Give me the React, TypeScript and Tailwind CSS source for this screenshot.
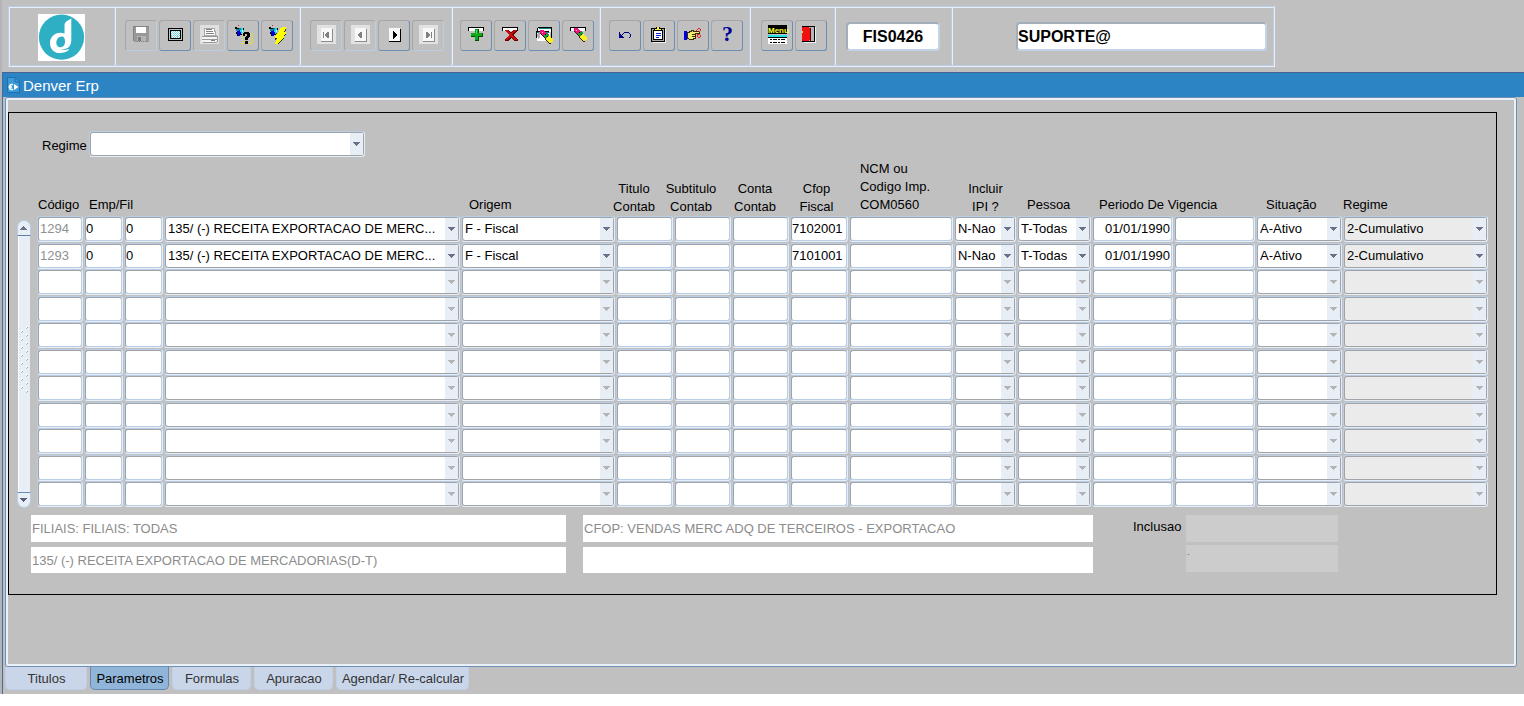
import { ReactNode } from 'react';

const font = 'font-["Liberation_Sans",Arial,sans-serif]';

/* ---------- toolbar icons ---------- */

const Icon = ({ children }: { children: ReactNode }) => (
  <svg width="20" height="19" viewBox="0 0 20 19" shapeRendering="crispEdges" className="block overflow-visible" aria-hidden="true">
    {children}
  </svg>
);

const Logo = () => (
  <svg width="47" height="47" viewBox="0 0 47 47" role="img" aria-label="Denver">
    <rect width="47" height="47" fill="#fff" />
    <circle cx="23.5" cy="23.2" r="22.6" fill="#2eafc4" />
    <path d="M33 4.5C32 6 27 6.500 26.500 11V19.500C18.500 17 12 22 12 29C12 36 17 39.500 23 39C27 38.800 30 37 31.500 35C28 36 25 36.300 22.500 35.800C31 35.500 33.300 31 33.300 26V4.500Z" fill="#fff" />
    <path d="M24 22.500C20.500 22.500 18.300 25.500 18.300 28.700C18.300 31.500 20 33.300 22.300 33.300C25.500 33.300 27 30.800 27 27.500C27 24.500 26 22.500 24 22.500Z" fill="#2eafc4" />
  </svg>
);

const SaveIcon = () => (
  <Icon>
    <path d="M1 0H17V16H2L1 15Z" fill="#989898" />
    <path d="M1 0H17V1H1ZM1 0H2V15H1Z" fill="#848484" />
    <rect x="4" y="1" width="10" height="6" fill="#fff" />
    <rect x="5" y="10" width="9" height="6" fill="#b4b4b4" />
    <rect x="6" y="11" width="3" height="4" fill="#7c7c7c" />
    <path d="M5 15.500H14" stroke="#808080" strokeDasharray="1 1" />
  </Icon>
);

const ScreenIcon = () => (
  <Icon>
    <rect x="2.500" y="2.500" width="14" height="12" rx="1" fill="#c0c0c0" stroke="#000" />
    <rect x="4.500" y="4.500" width="10" height="8" fill="#fff" stroke="#000" />
    <path d="M5 5.500H14M5 7.500H14M5 9.500H14M5 11.500H14" stroke="#5cd4dc" strokeDasharray="1 1" />
    <path d="M6 6.500H14M6 8.500H14M6 10.500H14" stroke="#7ce0e4" strokeDasharray="1 1" />
    <path d="M5 10.500H12" stroke="#e4a0b4" strokeDasharray="1 2" />
  </Icon>
);

const PrintIcon = () => (
  <Icon>
    <rect y="-1" width="19" height="19" fill="#e0e0e0" />
    <path d="M4 2H14L16 9H4Z" fill="#fff" stroke="#a8a8a8" strokeWidth="1" />
    <path d="M6 3.500H12M6 5.500H13M6 7.500H14" stroke="#808080" />
    <path d="M2 11H18V16H2Z" fill="#f4f4f4" />
    <path d="M2 10.500H18M2 13.500H18M3 16.500H17M17.500 11V16" stroke="#989898" />
    <rect x="11" y="14" width="4" height="1" fill="#808080" />
  </Icon>
);

const Flashlight = () => (
  <>
    <path d="M1 1H3V2H5V3H3V5H2V3H1Z" fill="#000" />
    <path d="M2 3H5V2H7V4H5V6H3V5H2Z" fill="#008c98" />
    <path d="M3 5H5V4H7V8H6V10H4V8H3Z" fill="#0000d8" />
    <path d="M7 2H9V4H10V6H9V8H7V6H6V4H7Z" fill="#20d8f0" />
    <path d="M9 2H10V4H9ZM2 6H3V8H4V10H3V8H2ZM6 8H8V9H6Z" fill="#000" />
    <path d="M8 4H9V6H8Z" fill="#fff" />
    <path d="M4 -1H5V0H4Z" fill="#e02020" />
  </>
);

const QueryHelpIcon = () => (
  <Icon>
    <Flashlight />
    <path d="M8.500 7V18M16.500 7V18M18.500 8V18" stroke="#f0e030" strokeDasharray="1 1" />
    <path d="M7 17.500H18M10 15.500H18" stroke="#f0e030" strokeDasharray="1 1" />
    <path d="M9 8V7H10V6H15V7H16V11H15V12H14V14H11V11H12V10H13V8H11V10H9ZM11 15H14V18H11Z" fill="#000" />
  </Icon>
);

const ExecuteQueryIcon = () => (
  <Icon>
    <Flashlight />
    <path d="M14 1H18V3H17V5H16V6H18V8H17V9H16V11H16V12H15V13H14V14H13V15H12V16H11V17H10V18H7V16H8V14H9V12H7V10H8V8H9V7H10V6H11V4H12V2H14Z" fill="#ffff00" />
    <path d="M17 3H18V5H17V6H16V5H17ZM17 8H18V9H17V10H16V9H17ZM15 12H16V13H15V14H14V13H15ZM13 14H14V15H13V16H12V15H13ZM11 16H12V17H11V18H10V17H11ZM7 12H9V13H8V14H7ZM8 7H9V8H8Z" fill="#303000" />
  </Icon>
);

const NavIcon = ({ shape, disabled }: { shape: string; disabled?: boolean }) => (
  <Icon>
    {disabled && <rect y="-1" width="19" height="19" fill="#e2e2e2" />}
    <rect x="4" y="2" width="11" height="13" fill="#f8f8f8" />
    <path d="M4 15.500H16M15.500 3V16" stroke={disabled ? '#8c8c8c' : '#000'} />
    <path d={shape} fill={disabled ? '#808080' : '#000'} />
  </Icon>
);

const RecordBar = () => (
  <>
    <rect x="1" y="1" width="16" height="4" fill="#fff" />
    <path d="M1 1.500H17M1.500 1V5M16.500 1V5" stroke="#000" />
  </>
);

const InsertIcon = () => (
  <Icon>
    <RecordBar />
    <path d="M8 3H12V7H16V11H12V15H8V11H4V7H8Z" fill="#004c00" />
    <path d="M8 3H11V7H15V10H11V14H8V10H4V7H8Z" fill="#10a818" />
    <path d="M9 4H10V8H9Z" fill="#50e050" />
  </Icon>
);

const DeleteIcon = () => (
  <Icon>
    <RecordBar />
    <path d="M4 4H8L10 7L12 4H16V5L12.500 9L17 14V15H13L10.500 12L8 15H4V14L8 9Z" fill="#700000" />
    <path d="M4 4H7L10 8L13 4H15L11 9L16 14H13L10 10L7 14H5L8 9Z" fill="#c81010" />
  </Icon>
);

// pencil eraser: pink tip, green band, yellow body
const Eraser = () => (
  <>
    <path d="M5 2H9V3H10V4H11V5H12V6H10V7H9V8H8V7H7V6H6V5H5Z" fill="#f01088" />
    <path d="M12 5H13V6H14V8H13V9H12V10H10V9H9V7H10V6H12Z" fill="#10a830" />
    <path d="M13 8H15V9H16V10H17V11H18V14H16V15H14V14H13V13H12V12H11V10H12V9H13Z" fill="#f8f020" />
    <path d="M5 5H6V6H7V7H8V8H9V9H10V10H11V12H12V13H13V14H14V15H16V16H14V15H13V14H12V13H11V12H10V10H9V9H8V8H7V7H6V6H5Z" fill="#302000" />
    <path d="M10 6H11V7H10ZM12 8H13V9H12Z" fill="#000" />
    <path d="M7 4H8V5H7Z" fill="#ffd040" />
  </>
);

const EnterQueryIcon = () => (
  <Icon>
    <rect x="3" y="1" width="14" height="5" fill="#fff" />
    <path d="M3 1.500H17M2.500 2V6M16.500 2V14" stroke="#000" />
    <path d="M4 2.500H16M1 6.500H14" stroke="#108888" strokeWidth="1" />
    <rect x="2" y="7" width="13" height="8" fill="#fff" />
    <path d="M1 5.500H14M1.500 6V12" stroke="#000" />
    <path d="M2 8L5 6V11L3 14Z" fill="#b0b0b0" />
    <g transform="translate(0 2)">
      <Eraser />
    </g>
  </Icon>
);

const ClearIcon = () => (
  <Icon>
    <RecordBar />
    <Eraser />
  </Icon>
);

const UndoIcon = () => (
  <Icon>
    <path d="M3 6H4V8H5V9H6V10H7V11H8V12H3Z" fill="#000080" />
    <path d="M6 8H7V7H8V6H13V7H14V8H15V11H14V12H13V11H14V8H13V7H8V8H7V9H6Z" fill="#000080" />
  </Icon>
);

const ClipboardIcon = () => (
  <Icon>
    <path d="M15.500 3V16.500H3" stroke="#f0f0f0" fill="none" />
    <rect x="1.500" y="2.500" width="13" height="13" rx="1" fill="#a8a8a8" stroke="#000" />
    <rect x="3.500" y="4.500" width="9" height="9" fill="#fff" stroke="#000" />
    <path d="M6 1H10V3H12V5H4V3H6Z" fill="#000" />
    <path d="M7 1H9V3H11V4H5V3H7Z" fill="#f8f040" />
    <path d="M6 7.500H11M6 9.500H11M6 11.500H9" stroke="#1020e0" />
  </Icon>
);

const HandIcon = () => (
  <Icon>
    <rect x="0" y="5" width="3" height="9" fill="#0000e8" />
    <path d="M3 6H5V5H7V4H10V5H16V8H12V13H10V14H5V13H3Z" fill="#383000" />
    <path d="M4 7H6V6H8V5H9V6H15V7H11V12H9V13H5V12H4Z" fill="#f4ec70" />
    <path d="M8 8.500H12M8 10.500H11" stroke="#383000" />
    <path d="M12 4.500H13M13.500 4V3M14 2.500H16M16.500 3V5M16 5.500H15M13 8.500H16M16.500 9V11M16 11.500H14M13.500 11V9" stroke="#f02020" fill="none" />
  </Icon>
);

const HelpIcon = () => (
  <Icon>
    <text x="4" y="15" fill="#000090" fontSize="22" fontWeight="700" fontFamily="Liberation Serif, serif">?</text>
  </Icon>
);

const MenuIcon = () => (
  <Icon>
    <rect y="-1" width="19" height="9" fill="#000" />
    <text x="0" y="7" fill="#ffff30" fontSize="8" fontWeight="700" fontFamily="Liberation Sans, sans-serif">Menu</text>
    <rect y="9" width="19" height="2" fill="#28e0e8" />
    <rect y="11" width="19" height="7" fill="#fff" />
    <path d="M0 11.500H19" stroke="#000" />
    <path d="M2 13.500H18M2 16.500H18" stroke="#000" strokeDasharray="2 1 4 1" />
  </Icon>
);

const ExitIcon = () => (
  <Icon>
    <path d="M2 16.500H14M13.500 1V16" stroke="#f0f0f0" />
    <rect x=".5" y=".5" width="12" height="15" fill="#b8b8b8" stroke="#000" />
    <path d="M0 1H7V2H8V14H7V15H0Z" fill="#f01010" />
    <path d="M8.500 2V15" stroke="#600000" />
    <rect x="0" y="5" width="1" height="2" fill="#ffe020" />
  </Icon>
);

/* ---------- toolbar ---------- */

type Tool = { label: string; icon: ReactNode; disabled?: boolean };

const fileTools: Tool[] = [
  { label: 'Salvar', icon: <SaveIcon />, disabled: true },
  { label: 'Tela', icon: <ScreenIcon /> },
  { label: 'Imprimir', icon: <PrintIcon />, disabled: true },
  { label: 'Entrar consulta', icon: <QueryHelpIcon /> },
  { label: 'Executar consulta', icon: <ExecuteQueryIcon /> },
];

const navTools: Tool[] = [
  { label: 'Primeiro', icon: <NavIcon disabled shape="M6 6H7V12H6ZM12 6V12H11L8 9.500V8.500L11 6Z" />, disabled: true },
  { label: 'Anterior', icon: <NavIcon disabled shape="M11 6V12H10L7 9.500V8.500L10 6Z" />, disabled: true },
  { label: 'Proximo', icon: <NavIcon shape="M8 5V13H9L12 9.500V8.500L9 5Z" /> },
  { label: 'Ultimo', icon: <NavIcon disabled shape="M7 6V12H8L11 9.500V8.500L8 6ZM12 6H13V12H12Z" />, disabled: true },
];

const recordTools: Tool[] = [
  { label: 'Inserir', icon: <InsertIcon /> },
  { label: 'Excluir', icon: <DeleteIcon /> },
  { label: 'Limpar bloco', icon: <EnterQueryIcon /> },
  { label: 'Limpar registro', icon: <ClearIcon /> },
];

const editTools: Tool[] = [
  { label: 'Desfazer', icon: <UndoIcon /> },
  { label: 'Lista', icon: <ClipboardIcon /> },
  { label: 'Recortar', icon: <HandIcon /> },
  { label: 'Ajuda', icon: <HelpIcon /> },
];

const appTools: Tool[] = [
  { label: 'Menu', icon: <MenuIcon /> },
  { label: 'Sair', icon: <ExitIcon /> },
];

const Tools = ({ items }: { items: Tool[] }) => (
  <div className="flex gap-[2px] pt-3">
    {items.map((t) => (
      <button
        key={t.label}
        type="button"
        title={t.label}
        aria-label={t.label}
        disabled={t.disabled}
        className={`flex h-[31px] w-8 items-start rounded-[3px] border border-t-[#a6a6a6] border-l-[#a6a6a6] pt-[5px] pl-[6px] ${
          t.disabled ? 'border-r-[#b9cde5] border-b-[#b9cde5]' : 'border-r-[#6c90b4] border-b-[#6c90b4]'
        }`}
      >
        {t.icon}
      </button>
    ))}
  </div>
);

const Divider = () => <div className="w-[2px] shrink-0 border-l border-[#b9cde5] bg-[#e8effa]" />;

const Toolbar = () => (
  <div className="ml-[6px] flex w-fit border border-t-[#b9cde5] border-r-[#e8effa] border-b-[#e8effa] border-l-[#b9cde5]">
    <div className="flex h-[59px] border border-t-[#e8effa] border-r-[#b9cde5] border-b-[#b9cde5] border-l-[#e8effa]">
      <div className="w-[104px] pt-[6px] pl-7">
        <Logo />
      </div>
      <Divider />
      <div className="w-[183px] pl-[9px]"><Tools items={fileTools} /></div>
      <Divider />
      <div className="w-[150px] pl-[9px]"><Tools items={navTools} /></div>
      <Divider />
      <div className="w-[146px] pl-[7px]"><Tools items={recordTools} /></div>
      <Divider />
      <div className="w-[148px] pl-2"><Tools items={editTools} /></div>
      <Divider />
      <div className="w-[83px] pl-[10px]"><Tools items={appTools} /></div>
      <Divider />
      <div className="flex w-[115px] items-center pl-[10px]">
        <input
          aria-label="Programa"
          readOnly
          defaultValue="FIS0426"
          className="h-[29px] w-[94px] rounded-[4px] border-2 border-t-[#a4aebb] border-r-[#c3d4e9] border-b-[#c3d4e9] border-l-[#a4aebb] bg-white text-center text-base font-bold outline-none"
        />
      </div>
      <Divider />
      <div className="flex w-[320px] items-center pl-[63px]">
        <input
          aria-label="Usuario"
          readOnly
          defaultValue="SUPORTE@"
          className="h-[29px] w-[251px] rounded-[4px] border-2 border-t-[#a4aebb] border-r-[#c3d4e9] border-b-[#c3d4e9] border-l-[#a4aebb] bg-white text-base font-bold outline-none"
        />
      </div>
    </div>
  </div>
);

/* ---------- fields ---------- */

const ring = 'h-[26px] rounded-[3px] border border-t-[#b9cde5] border-l-[#b9cde5] border-r-[#e6edf6] border-b-[#e6edf6]';

const Field = ({ label, value = '', className = '' }: { label: string; value?: string; className?: string }) => (
  <div className={ring}>
    <input
      aria-label={label}
      defaultValue={value}
      className={`block h-6 w-full rounded-[3px] border border-t-[#a0a4a8] border-r-[#b9cde5] border-b-[#b9cde5] border-l-[#a0a4a8] bg-white pr-[1px] pb-[2px] outline-none ${className}`}
    />
  </div>
);

type ComboProps = { id?: string; label: string; value?: string; disabled?: boolean; gray?: boolean };

const Combo = ({ id, label, value = '', disabled, gray }: ComboProps) => (
  <div className={`relative ${ring}`}>
    <select
      id={id}
      aria-label={label}
      disabled={disabled}
      defaultValue={value}
      className={`block h-6 w-full appearance-none rounded-[3px] border border-[#a0a4a8] pl-[2px] opacity-100 outline-none ${gray ? 'bg-[#ebebeb]' : 'bg-white'}`}
    >
      <option value={value}>{value}</option>
    </select>
    <span className="pointer-events-none absolute top-[1px] right-[1px] bottom-[1px] flex w-[13px] items-center justify-center bg-[#e8eef6]">
      <svg width="7" height="4" viewBox="0 0 7 4" shapeRendering="crispEdges" aria-hidden="true">
        <path d="M0 0H7V1H6V2H5V3H4V4H3V3H2V2H1V1H0Z" fill={disabled ? '#b4b4b4' : '#6c7088'} />
      </svg>
    </span>
  </div>
);

/* ---------- parameters grid ---------- */

type Row = { codigo: string; emp: string; fil: string; titulo: string; origem: string; cfop: string; ipi: string; pessoa: string; inicio: string; situacao: string; regime: string };

const base = {
  emp: '0',
  fil: '0',
  titulo: '135/ (-) RECEITA EXPORTACAO DE MERC...',
  origem: 'F - Fiscal',
  ipi: 'N-Nao',
  pessoa: 'T-Todas',
  inicio: '01/01/1990',
  situacao: 'A-Ativo',
  regime: '2-Cumulativo',
};

const rows: (Row | null)[] = [
  { ...base, codigo: '1294', cfop: '7102001' },
  { ...base, codigo: '1293', cfop: '7101001' },
  ...Array(9).fill(null),
];

const one = 'pb-[2px] text-left';
const two = 'flex flex-col items-center';

const ParamTable = () => (
  <table className="w-full table-fixed border-collapse">
    <colgroup>
      <col className="w-[47px]" />
      <col className="w-[40px]" />
      <col className="w-[40px]" />
      <col />
      <col className="w-[155px]" />
      <col className="w-[58px]" />
      <col className="w-[58px]" />
      <col className="w-[58px]" />
      <col className="w-[59px]" />
      <col className="w-[105px]" />
      <col className="w-[63px]" />
      <col className="w-[75px]" />
      <col className="w-[82px]" />
      <col className="w-[82px]" />
      <col className="w-[87px]" />
      <col className="w-[146px]" />
    </colgroup>
    <thead>
      <tr className="h-[57px] align-bottom leading-[18px] whitespace-nowrap *:p-0 *:font-normal">
        <th><div className={`${one} pl-[1px]`}>Código</div></th>
        <th colSpan={2}><div className={`${one} pl-[5px]`}>Emp/Fil</div></th>
        <th aria-label="Titulo" />
        <th><div className={`${one} pl-2`}>Origem</div></th>
        <th><div className={`${two} pr-[22px]`}><span>Titulo</span><span>Contab</span></div></th>
        <th><div className={`${two} pr-6`}><span>Subtitulo</span><span>Contab</span></div></th>
        <th><div className={`${two} pr-3`}><span>Conta</span><span>Contab</span></div></th>
        <th><div className={`${two} pr-[6px]`}><span>Cfop</span><span>Fiscal</span></div></th>
        <th><div className={`${one} pl-[11px]`}>NCM ou<br />Codigo Imp.<br />COM0560</div></th>
        <th><div className={two}><span>Incluir</span><span>IPI ?</span></div></th>
        <th><div className={`${one} pl-[10px]`}>Pessoa</div></th>
        <th colSpan={2}><div className={`${one} pl-[7px]`}>Periodo De Vigencia</div></th>
        <th><div className={`${one} pl-[10px]`}>Situação</div></th>
        <th><div className={one}>Regime</div></th>
      </tr>
    </thead>
    <tbody>
      {rows.map((r, i) => (
        <tr key={i} className="align-top odd:h-[27px] even:h-[26px] *:p-0 *:pr-[1px]">
          <td><Field label="Código" value={r?.codigo} className="pl-[1px] text-[#909090]" /></td>
          <td><Field label="Empresa" value={r?.emp} /></td>
          <td><Field label="Filial" value={r?.fil} /></td>
          <td><Combo label="Titulo" value={r?.titulo} disabled={!r} /></td>
          <td><Combo label="Origem" value={r?.origem} disabled={!r} /></td>
          <td><Field label="Titulo Contab" /></td>
          <td><Field label="Subtitulo Contab" /></td>
          <td><Field label="Conta Contab" /></td>
          <td><Field label="Cfop Fiscal" value={r?.cfop} /></td>
          <td><Field label="NCM ou Codigo Imp." /></td>
          <td><Combo label="Incluir IPI" value={r?.ipi} disabled={!r} /></td>
          <td><Combo label="Pessoa" value={r?.pessoa} disabled={!r} /></td>
          <td><Field label="Inicio da vigencia" value={r?.inicio} className="text-right" /></td>
          <td><Field label="Fim da vigencia" /></td>
          <td><Combo label="Situação" value={r?.situacao} disabled={!r} /></td>
          <td><Combo label="Regime" value={r?.regime} disabled={!r} gray /></td>
        </tr>
      ))}
    </tbody>
  </table>
);

const ScrollBar = () => (
  <div className="mt-[61px] mr-[6px] flex w-[14px] shrink-0 flex-col">
    <button type="button" aria-label="Subir" className="flex h-4 items-center justify-center rounded-t-full border border-[#b9cde5] border-b-[#5f7fa8] bg-[#e8eef6]">
      <svg width="8" height="4" viewBox="0 0 8 4" shapeRendering="crispEdges"><path d="M3 0H4V1H5V2H6V3H7V4H0V3H1V2H2V1H3Z" fill="#6c7088" /></svg>
    </button>
    <div className="mx-[1px] flex flex-1 items-center justify-center border-l border-white bg-[#e8eef6] pb-2">
      <svg width="9" height="68" viewBox="0 0 9 68" shapeRendering="crispEdges" aria-hidden="true">
        {Array.from({ length: 17 }, (_, i) => (
          <g key={i}>
            <path d={`M${i % 2 ? 1 : 6} ${i * 4}h2v1h-1v1h-1z`} fill="#fff" />
            <path d={`M${i % 2 ? 2 : 7} ${i * 4 + 1}h1v1h-1z`} fill="#7c9cc4" />
            <path d={`M${i % 2 ? 1 : 6} ${i * 4 + 2}h1v1h-1z`} fill="#a8c0dc" />
          </g>
        ))}
      </svg>
    </div>
    <button type="button" aria-label="Descer" className="flex h-4 items-center justify-center rounded-b-full border border-[#b9cde5] border-t-[#6c90b4] bg-[#e8eef6]">
      <svg width="8" height="4" viewBox="0 0 8 4" shapeRendering="crispEdges"><path d="M0 0H7V1H6V2H5V3H4V4H3V3H2V2H1V1H0Z" fill="#5c6080" /></svg>
    </button>
  </div>
);

const info = 'block w-full bg-white px-[1px] text-[#8c8c8c] outline-none';

const Details = () => (
  <div className="mt-[7px] grid grid-cols-[535fr_510fr_386fr] gap-x-[17px] pl-[22px]">
    <div className="flex flex-col gap-[5px]">
      <input aria-label="Filiais" readOnly defaultValue="FILIAIS: FILIAIS: TODAS" className={`${info} h-[27px]`} />
      <input aria-label="Titulo" readOnly defaultValue="135/ (-) RECEITA EXPORTACAO DE MERCADORIAS(D-T)" className={`${info} h-[26px]`} />
    </div>
    <div className="flex flex-col gap-[5px]">
      <input aria-label="Cfop" readOnly defaultValue="CFOP: VENDAS MERC ADQ DE TERCEIROS - EXPORTACAO" className={`${info} h-[27px]`} />
      <input aria-label="Conta" readOnly className={`${info} h-[26px]`} />
    </div>
    <div className="flex pl-[23px]">
      <label htmlFor="inclusao" className="w-[53px] pt-[2px] leading-5">Inclusao</label>
      <div className="flex w-[152px] flex-col gap-[3px]">
        <input id="inclusao" readOnly className="h-[27px] bg-[#cccccc] outline-none" />
        <input aria-label="Data de inclusao" readOnly defaultValue="-" className="h-[27px] bg-[#cccccc] px-[1px] pb-[10px] text-[8px] text-[#607898] outline-none" />
      </div>
    </div>
  </div>
);

/* ---------- tabs ---------- */

const tabs = [
  { name: 'Titulos', width: 'w-[82px]' },
  { name: 'Parametros', width: 'w-[79px]' },
  { name: 'Formulas', width: 'w-[79px]' },
  { name: 'Apuracao', width: 'w-[79px]' },
  { name: 'Agendar/ Re-calcular', width: 'w-[133px]' },
];

const Tabs = () => (
  <div role="tablist" className="flex gap-[3px] pb-1 pl-[2px]">
    {tabs.map((t) => {
      const active = t.name === 'Parametros';
      return (
        <button
          key={t.name}
          type="button"
          role="tab"
          aria-selected={active}
          className={`h-[23px] rounded-b-[5px] border border-t-0 pt-[2px] pl-[1px] whitespace-nowrap ${t.width} ${
            active ? 'border-[#6488b0] bg-[#90b5d8] text-black' : 'border-[#bfd0e8] bg-[#c9d6e9] text-[#333]'
          }`}
        >
          {t.name}
        </button>
      );
    })}
  </div>
);

const App = () => (
  <div className={`min-w-fit border-l-2 border-[#b2b5ba] bg-[#c0c0c0] pt-[6px] text-[13px] text-black ${font}`}>
    <Toolbar />
    <div className="mt-[5px] border-l border-[#4a6a96]">
      <header className="flex h-[25px] items-center border-t border-[#4a6490] bg-[#2c84c5] pl-1 text-white">
        <svg width="13" height="16" viewBox="0 0 13 16" aria-hidden="true">
          <path d="M.5 .5H8L12.500 5V15.500H.5Z" fill="#3c9ad8" stroke="#2070b0" />
          <path d="M8 .5V5H12.500" fill="none" stroke="#2070b0" />
          <path d="M6 7.500H4.500C2 7.500 2 12.500 4.500 12.500H6M1.500 10H5" fill="none" stroke="#fff" strokeWidth="1.500" />
          <path d="M7 7V13L11.500 10Z" fill="#fff" />
        </svg>
        <h1 className="ml-[3px] pt-[2px] text-[15px] leading-5">Denver Erp</h1>
      </header>
      <div className="mr-[7px] ml-[2px] rounded-[3px] border border-[#6f8fb5]">
        <main className="rounded-[2px] border-2 border-[#eaf0f8] pt-3 pb-[69px]">
          <div className="mr-[17px] border border-black pt-[18px] pb-[21px]">
            <div className="flex items-center pl-[33px]">
              <label htmlFor="regime" className="w-[47px] pt-1">Regime</label>
              <div className="w-[276px]">
                <Combo id="regime" label="Regime" />
              </div>
            </div>
            <div className="mt-[2px] mr-[7px] ml-2 flex">
              <ScrollBar />
              <div className="min-w-0 flex-1">
                <ParamTable />
              </div>
            </div>
            <Details />
          </div>
        </main>
      </div>
      <Tabs />
    </div>
  </div>
);

export default App;
